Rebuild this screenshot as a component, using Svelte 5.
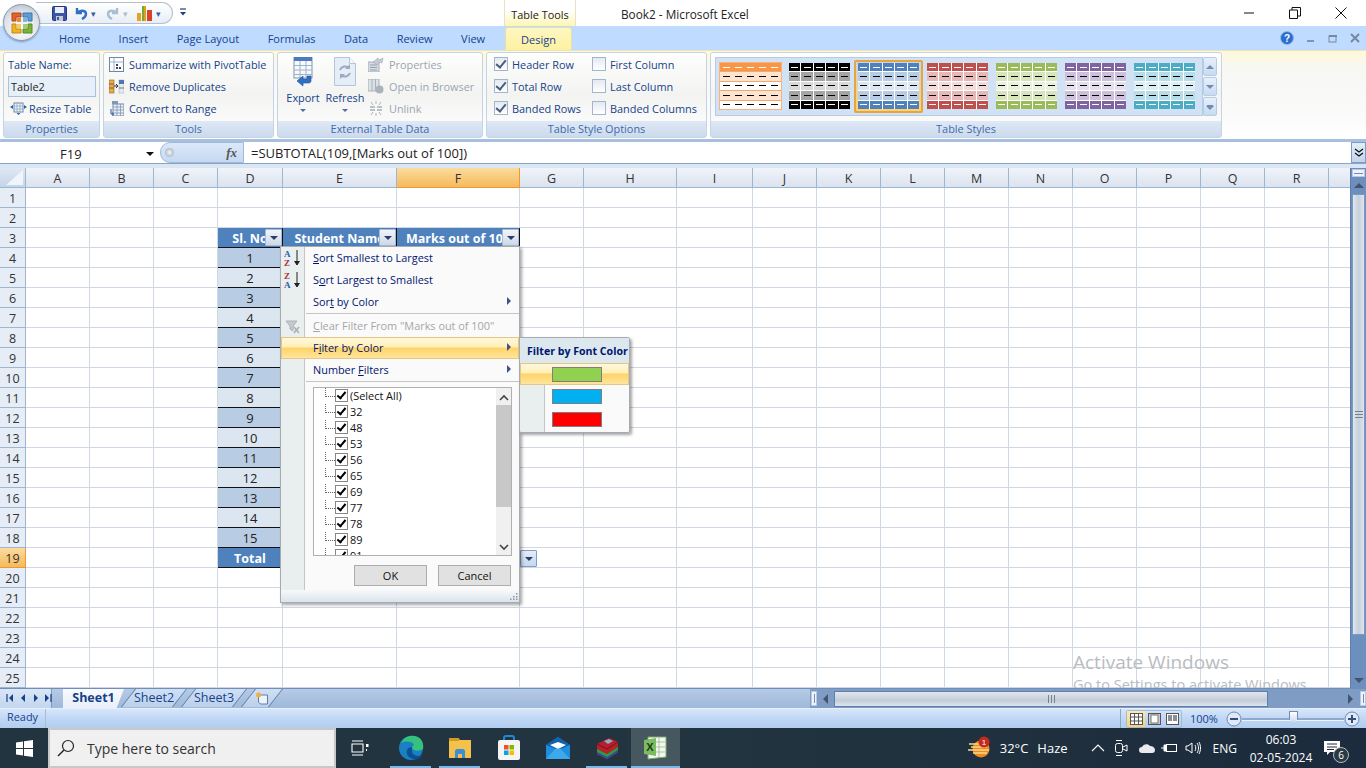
<script>
    const colWidths = [64, 64, 64, 65, 114, 123, 64, 93, 76, 64, 64, 64, 64, 64, 64, 64, 64, 64, 22];
    const colNames = ["A", "B", "C", "D", "E", "F", "G", "H", "I", "J", "K", "L", "M", "N", "O", "P", "Q", "R", ""];
    const rows = Array.from({length: 25}, (_, i) => i + 1);

    const gridTemplate = "26px " + colWidths.map(w => w + "px").join(" ");

    function cellClass(row, col) {
        let name = "cell";
        if (row === 3 && col >= 3 && col <= 5) name += " thead";
        if (row === 19 && col >= 3 && col <= 5) name += " thead";
        if (row > 3 && row < 19 && col >= 3 && col <= 5) name += row % 2 === 0 ? " band1" : " band2";
        return name;
    }

    function cellText(row, col) {
        if (col === 3 && row === 3) return "Sl. No";
        if (col === 4 && row === 3) return "Student Name";
        if (col === 5 && row === 3) return "Marks out of 100";
        if (col === 3 && row === 19) return "Total";
        if (col === 3 && row > 3 && row < 19) return String(row - 3);
        return "";
    }

    const styles = [
        {cls: "orange", head: "#f79646", band: "#fde4d0", light: "#ffffff", gap: "#f9a66a"},
        {cls: "", head: "#000000", band: "#a5a5a5", light: "#d9d9d9", gap: "#ffffff"},
        {cls: "picked", head: "#4f81bd", band: "#b8cce4", light: "#dce6f1", gap: "#ffffff"},
        {cls: "", head: "#c0504d", band: "#e6b8b7", light: "#f2dcdb", gap: "#ffffff"},
        {cls: "", head: "#9bbb59", band: "#d8e4bc", light: "#ebf1de", gap: "#ffffff"},
        {cls: "", head: "#8064a2", band: "#ccc0da", light: "#e4dfec", gap: "#ffffff"},
        {cls: "", head: "#4bacc6", band: "#b7dee8", light: "#daeef3", gap: "#ffffff"}
    ];

    function rowColor(s, r) {
        if (s.cls === "orange" && r === 4) return "#ffffff";
        if (r === 0 || r === 4) return s.head;
        return r === 2 ? s.light : s.band;
    }

    function dashColor(s, r) {
        if (s.cls === "orange" && r === 4) return "#000000";
        return r === 0 || r === 4 ? "#ffffff" : "#000000";
    }

    const values = ["(Select All)", "32", "48", "53", "56", "65", "69", "77", "78", "89", "91"];
    const tabs = ["Home", "Insert", "Page Layout", "Formulas", "Data", "Review", "View"];
</script>

<div class="excel">
    <header class="titlebar">
        <div class="officebtn">
            <svg width="26" height="26" viewBox="0 0 26 26">
                <path d="M3 3h9v4H7v4H3z" fill="#e2642a" stroke="#b8431a"/>
                <path d="M14 3h9v8h-4V7h-5z" fill="#4f95d6" stroke="#2b6aa8" opacity=".9"/>
                <path d="M3 14h4v5h5v4H3z" fill="#f0b41e" stroke="#c58a10"/>
                <path d="M19 14h4v9h-9v-4h5z" fill="#7bb23a" stroke="#558a20"/>
                <path d="M8 8h4v4H8z" fill="#e9873a"/>
                <path d="M14 8h4v4h-4z" fill="#7fb4e2"/>
                <path d="M8 14h4v4H8z" fill="#f5cb5a"/>
                <path d="M14 14h4v4h-4z" fill="#a3cc6a"/>
            </svg>
        </div>
        <div class="qat">
            <svg width="15" height="15" viewBox="0 0 15 15"><rect x=".5" y=".5" width="14" height="14" rx="1" fill="#3c55a5" stroke="#27377e"/><rect x="3" y="1" width="9" height="6" fill="#e8eefc"/><rect x="4" y="10" width="7" height="5" fill="#c6cbd8"/><rect x="5" y="11" width="2" height="3" fill="#3c55a5"/></svg>
            <svg class="q2" width="14" height="14" viewBox="0 0 14 14"><path d="M3 2v5h5M3.500 7C6 3.500 12 4 12 8c0 2.500-2 4-4 5" fill="none" stroke="#2f6fc4" stroke-width="2.400"/></svg>
            <span class="mini">▾</span>
            <svg class="q3" width="14" height="14" viewBox="0 0 14 14"><path d="M11 2v5H6M10.500 7C8 3.500 2 4 2 8c0 2.500 2 4 4 5" fill="none" stroke="#a9bdd3" stroke-width="2.400"/></svg>
            <span class="mini off">▾</span>
            <svg class="q4" width="17" height="17" viewBox="0 0 17 17"><rect x="1" y="8" width="4" height="8" fill="#e9a21f"/><rect x="6" y="1" width="4" height="15" fill="#d7a51a"/><rect x="6" y="1" width="2" height="15" fill="#7fa53a"/><rect x="11" y="5" width="5" height="11" fill="#d9432c"/></svg>
            <span class="mini">▾</span>
        </div>
        <svg class="customize" width="9" height="9" viewBox="0 0 9 9"><path d="M1 1h6" stroke="#1e3f80" stroke-width="1.200"/><path d="M1 4h6l-3 3.500z" fill="#1e3f80"/></svg>
        <div class="tools">Table Tools</div>
        <div class="doc-title">Book2 - Microsoft Excel</div>
        <div class="winbtns">
            <svg width="12" height="12" viewBox="0 0 12 12"><path d="M1 6h10" stroke="#111"/></svg>
            <svg width="12" height="12" viewBox="0 0 12 12"><path d="M.5 3h8v8.500h-8zM3 3V.5h8.500V9H8.500" fill="none" stroke="#111"/></svg>
            <svg width="12" height="12" viewBox="0 0 12 12"><path d="M.5.5l11 11M11.500.5l-11 11" stroke="#111"/></svg>
        </div>
    </header>

    <nav class="tabs">
        {#each tabs as t}
            <span>{t}</span>
        {/each}
        <span class="design">Design</span>
        <div class="appbtns">
            <svg width="14" height="14" viewBox="0 0 14 14"><circle cx="7" cy="7" r="6.500" fill="#2a6fd0" stroke="#9cb8dd"/><text x="7" y="11" text-anchor="middle" font-size="10" font-weight="700" fill="#fff" font-family="Liberation Sans">?</text></svg>
            <svg width="10" height="10" viewBox="0 0 10 10"><rect x="1" y="7" width="7" height="2" fill="#8295ab"/></svg>
            <svg width="10" height="10" viewBox="0 0 10 10"><rect x="1" y="3" width="7" height="6" fill="none" stroke="#76899f"/><rect x="1" y="2" width="8" height="2" fill="#76899f"/></svg>
            <svg width="10" height="10" viewBox="0 0 10 10"><path d="M1 1l8 8M9 1l-8 8" stroke="#76899f" stroke-width="2"/></svg>
        </div>
    </nav>

    <section class="ribbon">
        <div class="group g-props">
            <div class="gbody props">
                <span class="lbl">Table Name:</span>
                <div class="namebox">Table2</div>
                <div class="item rz">
                    <svg width="17" height="14" viewBox="0 0 17 14"><rect x="4" y="2" width="9" height="9" fill="#f2f6fb" stroke="#6a86a8"/><path d="M4 5h9M4 8h9M7 2v9M10 2v9" stroke="#9db2ca"/><path d="M0 6l3-2v4zM17 6l-3-2v4zM8.500 14l-2-2h4z" fill="#2a63ad"/></svg>
                    <span>Resize Table</span>
                </div>
            </div>
            <div class="glabel">Properties</div>
        </div>

        <div class="group g-tools">
            <div class="gbody list">
                <div class="item">
                    <svg width="15" height="15" viewBox="0 0 15 15"><rect x=".5" y=".5" width="14" height="14" fill="#fafcff" stroke="#6f85a0"/><path d="M.5 5h14M5 .5v14" stroke="#9db2ca"/><rect x="7" y="7" width="2" height="2" fill="#444"/><rect x="10" y="10" width="2" height="2" fill="#444"/><rect x="7" y="10" width="2" height="2" fill="#444"/></svg>
                    <span>Summarize with PivotTable</span>
                </div>
                <div class="item">
                    <svg width="15" height="15" viewBox="0 0 15 15"><rect x="0" y="1" width="5" height="13" fill="#e7a94b" stroke="#8a6a2c" stroke-width=".6"/><rect x="10" y="1" width="5" height="13" fill="#e6e9ef" stroke="#a7b2c2" stroke-width=".6"/><rect x="10" y="1" width="5" height="4" fill="#4d78b5"/><path d="M0 5h5M0 9h5M10 9h5" stroke="#5a4a2a" stroke-width=".7"/><path d="M5 7h4M7 5l2 2-2 2" stroke="#333" fill="none"/></svg>
                    <span>Remove Duplicates</span>
                </div>
                <div class="item">
                    <svg width="15" height="15" viewBox="0 0 15 15"><rect x="4" y="3" width="11" height="12" fill="#eef2f8" stroke="#6f85a0"/><path d="M4 6h11M4 9h11M4 12h11M8 3v12M11.500 3v12" stroke="#8ea3bd"/><rect x="3" y="0" width="6" height="3" fill="#7f98b9"/><path d="M2 8v5h2M3.500 11.500l1 1.500-1 1.500" stroke="#25599d" fill="none"/></svg>
                    <span>Convert to Range</span>
                </div>
            </div>
            <div class="glabel">Tools</div>
        </div>

        <div class="group g-ext">
            <div class="gbody ext">
                <div class="big">
                    <svg width="20" height="30" viewBox="0 0 20 30"><rect x="1" y="0" width="18" height="21" fill="#f7fafd" stroke="#7c93b2"/><rect x="1" y="0" width="18" height="4" fill="#4d79bd"/><path d="M1 8.500h18M1 13h18M1 17.500h18M7 4v17M13 4v17" stroke="#9fb2c8"/><path d="M18 19v5c0 1-1 2-2 2H10v3l-6-5 6-5v3h4v-3z" fill="#2f6fc4" stroke="#1e4f96" stroke-width=".6"/></svg>
                    <span>Export</span>
                    <i class="drop"></i>
                </div>
                <div class="big">
                    <svg width="22" height="30" viewBox="0 0 22 30"><path d="M.5.500h15l6 6v22H.5z" fill="#e5edf7" stroke="#b4c4da"/><path d="M15.500.5v6h6" fill="#f7fafd" stroke="#b4c4da"/><path d="M6 13a5.500 5.500 0 0 1 9-2M16 16a5.500 5.500 0 0 1-9 2" fill="none" stroke="#9aa9bd" stroke-width="2"/><path d="M16 7v5h-5zM6 22v-5h5z" fill="#9aa9bd"/></svg>
                    <span>Refresh</span>
                    <i class="drop"></i>
                </div>
                <div class="list off">
                    <div class="item">
                        <svg width="16" height="15" viewBox="0 0 16 15"><rect x="0" y="5" width="11" height="10" fill="#d5dbe2" stroke="#a7b0ba"/><path d="M2 8h7M2 10.500h7M2 13h7" stroke="#98a3ae"/><path d="M5 5l5-4 1 2 4-2-1 5-2-1-3 3z" fill="#c2cad3" stroke="#a0aab5" stroke-width=".6"/></svg>
                        <span>Properties</span>
                    </div>
                    <div class="item">
                        <svg width="16" height="15" viewBox="0 0 16 15"><rect x="0" y="0" width="11" height="12" fill="#dbe1e7" stroke="#a7b0ba"/><path d="M4 0v12M7.500 0v12" stroke="#a7b0ba"/><circle cx="11.500" cy="10.500" r="4" fill="#aab3bc"/></svg>
                        <span>Open in Browser</span>
                    </div>
                    <div class="item">
                        <svg width="16" height="15" viewBox="0 0 16 15"><path d="M2 6h5M2 9h5M9 6h5M9 9h5" stroke="#a7b0ba" stroke-width="1.600"/><path d="M8 0v3M8 12v3M3 1l2 3M13 1l-2 3M3 14l2-3M13 14l-2-3" stroke="#aab3bc"/></svg>
                        <span>Unlink</span>
                    </div>
                </div>
            </div>
            <div class="glabel">External Table Data</div>
        </div>

        <div class="group g-opts">
            <div class="gbody opts">
                <label class="chk"><i class="box on"></i>Header Row</label>
                <label class="chk"><i class="box"></i>First Column</label>
                <label class="chk"><i class="box on"></i>Total Row</label>
                <label class="chk"><i class="box"></i>Last Column</label>
                <label class="chk"><i class="box on"></i>Banded Rows</label>
                <label class="chk"><i class="box"></i>Banded Columns</label>
            </div>
            <div class="glabel">Table Style Options</div>
        </div>

        <div class="group g-styles">
            <div class="gbody gallery-wrap">
                <div class="gallery">
                    {#each styles as s}
                        <div class="thumb-frame {s.cls}">
                            <div class="thumb {s.cls}" style="background:{s.gap}">
                                {#each [0, 1, 2, 3, 4] as r}
                                    {#each [0, 1, 2, 3, 4] as c}
                                        <div class="tc" style="background:{rowColor(s, r)}">
                                            <i style="background:{dashColor(s, r)}"></i>
                                        </div>
                                    {/each}
                                {/each}
                            </div>
                        </div>
                    {/each}
                </div>
                <div class="gscroll">
                    <button aria-label="up"><i class="up"></i></button>
                    <button aria-label="down"><i class="dn"></i></button>
                    <button aria-label="more"><i class="more"></i></button>
                </div>
            </div>
            <div class="glabel">Table Styles</div>
        </div>
    </section>

    <section class="formula">
        <div class="namecell">
            <span>F19</span>
            <i class="blk"></i>
        </div>
        <div class="fxpill">
            <b class="knob"></b>
            <em>fx</em>
        </div>
        <div class="ftext">=SUBTOTAL(109,[Marks out of 100])</div>
        <div class="expand">
            <svg width="10" height="10" viewBox="0 0 10 10"><path d="M1 1l4 3 4-3M1 5l4 3 4-3" fill="none" stroke="#111" stroke-width="1.300"/></svg>
        </div>
    </section>

    <section class="sheet-wrap">
        <div class="sheet">
            <div class="grid" style="grid-template-columns:{gridTemplate}">
                <div class="corner"><i></i></div>
                {#each colNames as name, i}
                    <div class="colhead" class:sel={i === 5}>{name}</div>
                {/each}
                {#each rows as row}
                    <div class="rowhead" class:sel={row === 19}>{row}</div>
                    {#each colWidths as _, col}
                        <div class={cellClass(row, col)}>
                            {cellText(row, col)}
                            {#if row === 3 && col >= 3 && col <= 5}
                                <button class="filterbtn" aria-label="filter"><i></i></button>
                            {/if}
                        </div>
                    {/each}
                {/each}
            </div>

            <button class="filterbtn total-btn" aria-label="total"><i></i></button>

            <div class="watermark">
                <div>Activate Windows</div>
                <small>Go to Settings to activate Windows.</small>
            </div>

            <div class="menu">
                <div class="mi">
                    <svg class="mi-icon" width="20" height="20" viewBox="0 0 20 20"><text x="1" y="9" font-size="9" font-weight="700" fill="#2a5aa8" font-family="Liberation Serif">A</text><text x="1" y="18" font-size="9" font-weight="700" fill="#a8343a" font-family="Liberation Serif">Z</text><path d="M14 2v14M11.500 13l2.500 4 2.500-4" fill="#222" stroke="#222"/></svg>
                    <span><u>S</u>ort Smallest to Largest</span>
                </div>
                <div class="mi">
                    <svg class="mi-icon" width="20" height="20" viewBox="0 0 20 20"><text x="1" y="9" font-size="9" font-weight="700" fill="#a8343a" font-family="Liberation Serif">Z</text><text x="1" y="18" font-size="9" font-weight="700" fill="#2a5aa8" font-family="Liberation Serif">A</text><path d="M14 2v14M11.500 13l2.500 4 2.500-4" fill="#222" stroke="#222"/></svg>
                    <span>S<u>o</u>rt Largest to Smallest</span>
                </div>
                <div class="mi">
                    <span>Sor<u>t</u> by Color</span>
                    <i class="arr"></i>
                </div>
                <div class="msep first"></div>
                <div class="mi dis">
                    <svg class="mi-icon" width="16" height="16" viewBox="0 0 16 16"><path d="M1 2h11L8 7v5L5 10V7z" fill="#c3cbd0" stroke="#aab2b8"/><path d="M9 8l5 6M14 8l-5 6" stroke="#a8b0b6" stroke-width="1.500"/></svg>
                    <span><u>C</u>lear Filter From "Marks out of 100"</span>
                </div>
                <div class="mi hot">
                    <span>F<u>i</u>lter by Color</span>
                    <i class="arr"></i>
                </div>
                <div class="mi">
                    <span>Number <u>F</u>ilters</span>
                    <i class="arr"></i>
                </div>
                <div class="msep"></div>

                <div class="listbox">
                    <div class="vals">
                        {#each values as v}
                            <div class="val"><b class="dots"></b><i class="tick"></i>{v}</div>
                        {/each}
                    </div>
                    <div class="lscroll">
                        <svg width="10" height="8" viewBox="0 0 10 8"><path d="M1 6l4-4 4 4" fill="none" stroke="#444" stroke-width="1.600"/></svg>
                        <div class="lthumb"></div>
                        <svg width="10" height="8" viewBox="0 0 10 8"><path d="M1 2l4 4 4-4" fill="none" stroke="#444" stroke-width="1.600"/></svg>
                    </div>
                </div>

                <div class="mbtns">
                    <button>OK</button>
                    <button>Cancel</button>
                </div>
                <div class="mfoot">
                    <svg width="8" height="8" viewBox="0 0 8 8"><path d="M6 1h1.500v1.500H6zM3 4h1.500v1.500H3zM6 4h1.500v1.500H6zM0 6.500h1.500V8H0zM3 6.500h1.500V8H3zM6 6.500h1.500V8H6z" fill="#8c9aa8"/></svg>
                </div>
            </div>

            <div class="submenu">
                <div class="subhead">Filter by Font Color</div>
                <div class="swrow hot"><i style="background:#92d050"></i></div>
                <div class="swrow"><i style="background:#00b0f0"></i></div>
                <div class="swrow"><i style="background:#ff0000"></i></div>
            </div>
        </div>

        <div class="vscroll">
            <div class="split"><i></i></div>
            <div class="varrow"><i class="up"></i></div>
            <div class="vthumb"><b></b></div>
            <div class="vtrack"></div>
            <div class="varrow low"><i class="dn"></i></div>
        </div>
    </section>

    <section class="sheetbar">
        <div class="navs">
            <svg width="46" height="10" viewBox="0 0 46 10"><path d="M1 1v8" stroke="#15428b" stroke-width="1.200"/><path d="M7 1L3 5l4 4zM19 1l-4 4 4 4zM28 1l4 4-4 4zM39 1l4 4-4 4z" fill="#15428b"/><path d="M45 1v8" stroke="#15428b" stroke-width="1.200"/></svg>
        </div>
        <div class="sheets">
            <span class="stab on">Sheet1</span>
            <span class="stab">Sheet2</span>
            <span class="stab">Sheet3</span>
            <span class="stab add">
                <svg width="14" height="13" viewBox="0 0 14 13"><path d="M3.500 3h9v9h-7l-2-2z" fill="#eef3fa" stroke="#5d7ea8"/><circle cx="3.500" cy="3" r="2.500" fill="#f0b040"/></svg>
            </span>
        </div>
        <div class="hs-area">
            <div class="hsplit"><i></i></div>
            <i class="harr left"></i>
            <div class="hthumb"><b></b></div>
            <div class="htrack"></div>
            <i class="harr right"></i>
            <div class="hsplit"><i></i></div>
        </div>
    </section>

    <footer class="status">
        <span class="ready">Ready</span>
        <div class="zoombar">
            <div class="views">
                <span class="on"><svg width="13" height="12" viewBox="0 0 13 12"><rect x=".5" y=".5" width="12" height="11" fill="#fff" stroke="#555"/><path d="M.5 4h12M.5 8h12M4.500.5v11M8.500.5v11" stroke="#555"/></svg></span>
                <span><svg width="13" height="12" viewBox="0 0 13 12"><rect x=".5" y=".5" width="12" height="11" fill="#c9cdd2" stroke="#555"/><rect x="3" y="2" width="7" height="8" fill="#fff" stroke="#777"/></svg></span>
                <span><svg width="13" height="12" viewBox="0 0 13 12"><rect x=".5" y=".5" width="12" height="11" fill="#fff" stroke="#555"/><rect x="2" y="2" width="4" height="6" fill="#8a8f96"/><rect x="7" y="2" width="4" height="6" fill="#8a8f96"/></svg></span>
            </div>
            <span class="pct">100%</span>
            <svg class="zb" width="16" height="16" viewBox="0 0 16 16"><circle cx="8" cy="8" r="7" fill="#dfe9f7" stroke="#6d8ab3"/><path d="M4 8h8" stroke="#32507c" stroke-width="2"/></svg>
            <div class="slider"><i></i></div>
            <svg class="zb" width="16" height="16" viewBox="0 0 16 16"><circle cx="8" cy="8" r="7" fill="#dfe9f7" stroke="#6d8ab3"/><path d="M4 8h8M8 4v8" stroke="#32507c" stroke-width="2"/></svg>
        </div>
    </footer>

    <footer class="taskbar">
        <div class="start">
            <svg width="17" height="17" viewBox="0 0 17 17"><path d="M0 2.400l7-1V8H0zM8 1.300L17 0v8H8zM0 9h7v6.600l-7-1zM8 9h9v8l-9-1.300z" fill="#fff"/></svg>
        </div>
        <div class="search">
            <svg width="18" height="18" viewBox="0 0 18 18"><circle cx="11" cy="7" r="5.500" fill="none" stroke="#222" stroke-width="1.200"/><path d="M7 11l-6 6" stroke="#222" stroke-width="1.400"/></svg>
            <span>Type here to search</span>
        </div>
        <div class="apps">
            <span class="app tv">
                <svg width="18" height="16" viewBox="0 0 18 16"><path d="M1 1h11M1 15h11M1 4h11v8H1z" fill="none" stroke="#fff" stroke-width="1.100"/><rect x="15" y="4" width="2.500" height="3" fill="#fff"/><rect x="15" y="9" width="1" height="2" fill="#fff"/></svg>
            </span>
            <span class="app run">
                <svg width="26" height="26" viewBox="0 0 26 26"><circle cx="13" cy="13" r="12" fill="#1b7fc4"/><path d="M3 8C6 1 14-1 20 2c4 2 6 7 5 12-4 3-10 2-11-1 0-2 2-3 2-3-1-3-7-5-13-2z" fill="#35c27e"/><path d="M14 12c-4 0-6 3-5 7 1 3 5 6 11 5 2-1 3-2 4-4-3 2-9 1-10-3z" fill="#0b4f94"/></svg>
            </span>
            <span class="app run">
                <svg width="24" height="22" viewBox="0 0 24 22"><path d="M1 1h9l2 2h11v18H1z" fill="#f4c24c"/><rect x="1" y="1" width="10" height="3" fill="#d39b1d"/><path d="M7 21v-7c0-1 1-2 2-2h6c1 0 2 1 2 2v7h-3v-4h-4v4z" fill="#3b8fd6"/></svg>
            </span>
            <span class="app">
                <svg width="24" height="26" viewBox="0 0 24 26"><path d="M7 6V3c0-1 1-2 2-2h6c1 0 2 1 2 2v3" fill="none" stroke="#1b8ad8" stroke-width="2"/><rect x="1" y="5" width="22" height="20" rx="2" fill="#f4f4f4"/><rect x="7" y="10" width="4.500" height="4.500" fill="#f25022"/><rect x="12.500" y="10" width="4.500" height="4.500" fill="#7fba00"/><rect x="7" y="15.500" width="4.500" height="4.500" fill="#00a4ef"/><rect x="12.500" y="15.500" width="4.500" height="4.500" fill="#ffb900"/></svg>
            </span>
            <span class="app">
                <svg width="24" height="22" viewBox="0 0 24 22"><path d="M0 8l12-8 12 8v14H0z" fill="#1e8fdc"/><path d="M0 8l12-8 12 8-12 5z" fill="#0f62ad"/><path d="M4 8l8-3 8 3-8 4z" fill="#fff"/><path d="M0 22L10 11l2 1 2-1 10 11z" fill="#3ba9ec"/></svg>
            </span>
            <span class="app run">
                <svg width="24" height="24" viewBox="0 0 24 24"><path d="M2 8l12-6 9 4v10l-11 7-10-5z" fill="#b5202a"/><path d="M2 8l10 5 11-7" fill="none" stroke="#7a1018"/><path d="M2 13l10 5 11-7v5l-11 7-10-5z" fill="#2f9b3f"/><path d="M2 16l10 5 11-7v2l-11 7-10-5z" fill="#3b3fa8"/><path d="M9 5l5-2 4 2-5 3z" fill="#9aa7c9"/></svg>
            </span>
            <span class="app run active">
                <svg width="25" height="24" viewBox="0 0 25 24"><path d="M5 1h18v20L5 23z" fill="#f3f7ef" stroke="#7aa86a"/><path d="M11 6h11M11 11h11M11 16h11M16 2v19" stroke="#a9c49c"/><path d="M1 4l12-2v18L1 18z" fill="#7dbb62"/><text x="7" y="15" text-anchor="middle" font-size="11" font-weight="700" fill="#123d1a" font-family="Liberation Sans">X</text></svg>
            </span>
        </div>
        <div class="tray">
            <div class="weather">
                <svg width="24" height="24" viewBox="0 0 24 24"><circle cx="14" cy="13" r="8.500" fill="#ee8a23"/><path d="M2 8h11M4 11h16M1 14h21M6 17h14" stroke="#f7d98a" stroke-width="1.500"/><circle cx="17" cy="6" r="5.500" fill="#c42b1c"/><text x="17" y="9" text-anchor="middle" font-size="8" fill="#fff" font-family="Liberation Sans">1</text></svg>
            </div>
            <span class="temp">32°C</span>
            <span class="haze">Haze</span>
            <svg class="t1" width="14" height="8" viewBox="0 0 14 8"><path d="M1 7l6-6 6 6" fill="none" stroke="#fff" stroke-width="1.100"/></svg>
            <svg class="t2" width="14" height="18" viewBox="0 0 14 18"><rect x="1.500" y="4.500" width="7" height="9" rx="2" fill="none" stroke="#fff"/><path d="M9 8l4-2v6l-4-2M2 1.500h6M2 16.500h6" fill="none" stroke="#fff"/></svg>
            <svg class="t3" width="16" height="10" viewBox="0 0 16 10"><path d="M3 10a3 3 0 0 1 0-6c1-3 6-4 8-1 3 0 5 2 5 4s-1 3-3 3z" fill="#e8eaee"/></svg>
            <svg class="t4" width="16" height="12" viewBox="0 0 16 12"><rect x="5.500" y="2.500" width="10" height="7" fill="none" stroke="#fff"/><path d="M0 6h3M3 3h2v6H3z" fill="#fff" stroke="#fff"/></svg>
            <svg class="t5" width="16" height="14" viewBox="0 0 16 14"><path d="M1 5h2l4-3v10L3 9H1zM10 4c1 2 1 4 0 6M12 2c2 3 2 7 0 10M14 1c2 4 2 8 0 12" fill="none" stroke="#fff"/></svg>
            <span class="eng">ENG</span>
            <div class="clock"><span>06:03</span><span>02-05-2024</span></div>
            <div class="notif">
                <svg width="16" height="15" viewBox="0 0 16 15"><path d="M0 0h16v11H6l-3 3v-3H0z" fill="#fff"/><path d="M3 3h10M3 6h10M3 8.500h7" stroke="#1c2b3a"/></svg>
                <b>6</b>
            </div>
        </div>
    </footer>
</div>

<style>
    :global(body) {
        margin: 0;
        background: #fff;
    }

    .excel {
        width: 1366px;
        height: 768px;
        overflow: hidden;
        position: relative;
        font-family: "Open Sans", "Liberation Sans", sans-serif;
        font-size: 10.9px;
        color: #15428b;
        display: flex;
        flex-direction: column;
    }

    svg {
        display: block;
        flex: none;
    }

    button {
        font-family: inherit;
        padding: 0;
    }

    /* title row */
    .titlebar {
        height: 26px;
        display: flex;
        align-items: flex-start;
        background: #fff;
        position: relative;
    }

    .officebtn {
        position: absolute;
        left: 3px;
        top: 4px;
        width: 37px;
        height: 37px;
        box-sizing: border-box;
        border-radius: 50%;
        z-index: 3;
        border: 1px solid #8b98a8;
        box-shadow: 0 1px 2px rgba(60, 80, 110, .5);
        background: radial-gradient(circle at 50% 70%, #fff, #dde2e8 60%, #a9b2be);
        display: flex;
        align-items: center;
        justify-content: center;
    }

    .qat {
        margin-left: 36px;
        margin-top: 2px;
        width: 137px;
        height: 22px;
        box-sizing: border-box;
        padding-left: 16px;
        display: flex;
        align-items: center;
        background: linear-gradient(#fff, #e8eef6);
        border: 1px solid #b4c0ce;
        border-left: 0;
        border-radius: 0 11px 11px 0;
    }

    .q2 {
        margin-left: 7px;
    }

    .q3 {
        margin-left: 10px;
    }

    .q4 {
        margin-left: 8px;
    }

    .mini {
        font-size: 9px;
        color: #3a5f9d;
        margin-left: 3px;
    }

    .mini.off {
        color: #b2bdc9;
    }

    .customize {
        margin: 8px 0 0 6px;
    }

    .tools {
        margin-left: 316px;
        width: 72px;
        height: 26px;
        line-height: 29px;
        text-align: center;
        color: #222;
        background: linear-gradient(#fff, #fff 40%, #fdf6b4);
        border-left: 1px solid #e8e2c0;
        border-right: 1px solid #e8e2c0;
        box-sizing: border-box;
    }

    .doc-title {
        margin-left: 45px;
        font-size: 11.8px;
        line-height: 28px;
        color: #222;
    }

    .winbtns {
        margin-left: auto;
        display: flex;
        gap: 34px;
        padding: 7px 19px 0 0;
    }

    /* tabs */
    .tabs {
        height: 24px;
        background: #bfdbff;
        display: flex;
        align-items: center;
        gap: 28.5px;
        padding-left: 59px;
        font-size: 11px;
        color: #15428b;
        position: relative;
    }

    .tabs .design {
        position: absolute;
        left: 505px;
        top: 1px;
        width: 67px;
        height: 23px;
        line-height: 24px;
        text-align: center;
        background: linear-gradient(#fdf7c2, #fdf1a0);
        border: 1px solid #e6dfa8;
        border-bottom: 0;
        border-radius: 3px 3px 0 0;
        box-sizing: border-box;
    }

    .appbtns {
        margin-left: auto;
        display: flex;
        align-items: center;
        gap: 12px;
        padding-right: 6px;
    }

    /* ribbon */
    .ribbon {
        height: 92px;
        box-sizing: border-box;
        padding: 1px 2px 0 3px;
        display: flex;
        gap: 3px;
        background: linear-gradient(#fff9d8, #f7f7f4 20%, #fafafa 70%, #fff);
        border-top: 1px solid #e8e2c0;
        border-bottom: 3px solid #a7c0df;
    }

    .group {
        border: 1px solid #c5d3e5;
        border-radius: 3px;
        display: flex;
        flex-direction: column;
        box-sizing: border-box;
        background: linear-gradient(#fefefc, #f3f4f2 50%, #fefefe);
        height: 86px;
    }

    .gbody {
        flex: 1;
        min-height: 0;
    }

    .glabel {
        height: 16px;
        line-height: 16px;
        text-align: center;
        color: #3e6aaa;
        background: linear-gradient(#dfe9f6, #cbdaed);
    }

    .g-props {
        width: 97px;
    }

    .g-tools {
        width: 171px;
    }

    .g-ext {
        width: 206px;
    }

    .g-opts {
        width: 221px;
    }

    .g-styles {
        width: 512px;
    }

    .props {
        padding: 3px 4px 0;
    }

    .lbl {
        display: block;
        height: 18px;
        line-height: 18px;
    }

    .namebox {
        width: 88px;
        height: 21px;
        line-height: 20px;
        box-sizing: border-box;
        border: 1px solid #a9c1de;
        background: #e7eff9;
        color: #222;
        padding-left: 2px;
        margin-top: 2px;
    }

    .item {
        display: flex;
        align-items: center;
        gap: 5px;
        height: 22px;
        white-space: nowrap;
    }

    .rz {
        gap: 2px;
        margin-left: 2px;
    }

    .list {
        padding-left: 5px;
    }

    .ext {
        display: flex;
        padding: 4px 0 0 4px;
    }

    .big {
        width: 42px;
        display: flex;
        flex-direction: column;
        align-items: center;
        color: #15428b;
    }

    .big span {
        margin-top: 3px;
    }

    .drop {
        margin-top: 4px;
        border: 3px solid transparent;
        border-top: 3px solid #4f6f9f;
        border-bottom: 0;
    }

    .ext .list {
        padding: 0 0 0 2px;
        margin-top: -4px;
        color: #9aa5b1;
    }

    .opts {
        display: grid;
        grid-template-columns: 98px 1fr;
        grid-auto-rows: 22px;
        padding: 0 0 0 7px;
    }

    .chk {
        display: flex;
        align-items: center;
        gap: 4px;
        white-space: nowrap;
    }

    .box {
        width: 12px;
        height: 12px;
        border: 1px solid #a0b5d0;
        background: linear-gradient(#e4e9f0, #fff);
        position: relative;
        flex: none;
    }

    .box.on::after {
        content: "";
        position: absolute;
        left: 3px;
        top: 0;
        width: 4px;
        height: 8px;
        border: solid #4a5f7e;
        border-width: 0 2px 2px 0;
        transform: rotate(40deg);
    }

    .gallery-wrap {
        display: flex;
        padding: 4px 0 0 4px;
    }

    .gallery {
        width: 488px;
        height: 59px;
        box-sizing: border-box;
        background: #d2e2f5;
        border: 1px solid #b6cbe6;
        padding: 2px 0 0 0;
        display: flex;
    }

    .thumb-frame {
        width: 69px;
        height: 53px;
        box-sizing: border-box;
        padding: 3px 4px;
        flex: none;
    }

    .thumb-frame.picked {
        background: linear-gradient(#c7d6e8, #ffd36e);
        border: 2px solid #e9a33f;
        border-radius: 2px;
        padding: 1px 2px;
    }

    .thumb {
        width: 61px;
        height: 46px;
        display: grid;
        grid-template-columns: repeat(5, 1fr);
        grid-template-rows: repeat(5, 1fr);
        gap: 1px;
    }

    .thumb.orange {
        column-gap: 0;
        outline: 1px solid #f9b27c;
    }

    .tc {
        display: flex;
        align-items: center;
        justify-content: center;
    }

    .tc i {
        width: 7px;
        height: 1px;
    }

    .gscroll {
        display: flex;
        flex-direction: column;
        gap: 1px;
        width: 14px;
    }

    .gscroll button {
        height: 19px;
        border: 1px solid #b6cbe6;
        background: linear-gradient(#e7f0fb, #c8daf0);
        border-radius: 2px;
        display: flex;
        align-items: center;
        justify-content: center;
    }

    .gscroll .up {
        border: 4px solid transparent;
        border-bottom: 4px solid #6f8cb4;
        border-top: 0;
    }

    .gscroll .dn {
        border: 4px solid transparent;
        border-top: 4px solid #6f8cb4;
        border-bottom: 0;
    }

    .gscroll .more {
        border: 4px solid transparent;
        border-top: 4px solid #6f8cb4;
        border-bottom: 0;
        position: relative;
        top: 1px;
        box-shadow: 0 -2px 0 -1px #6f8cb4;
    }

    /* formula bar */
    .formula {
        height: 26px;
        box-sizing: border-box;
        display: flex;
        background: #fff;
        border-bottom: 4px solid #dbe6f5;
        box-shadow: inset 0 -1px 0 #8aa4c4;
        font-size: 13px;
        color: #222;
    }

    .namecell {
        width: 160px;
        display: flex;
        align-items: center;
        padding: 1px 0 0 60px;
        box-sizing: border-box;
    }

    .blk {
        margin-left: 64px;
        border: 4px solid transparent;
        border-top: 4px solid #111;
        border-bottom: 0;
    }

    .fxpill {
        width: 84px;
        height: 21px;
        box-sizing: border-box;
        background: linear-gradient(#dbe8f8, #c6d9f1);
        border: 1px solid #a2bad9;
        border-radius: 10px 0 0 10px;
        display: flex;
        align-items: center;
        padding: 0 6px 0 4px;
        justify-content: space-between;
    }

    .knob {
        width: 9px;
        height: 9px;
        border-radius: 50%;
        background: radial-gradient(#f4f6f9, #96a5b8);
    }

    .fxpill em {
        font-family: "Liberation Serif", serif;
        font-size: 13px;
        font-weight: 700;
        color: #555;
    }

    .ftext {
        flex: 1;
        line-height: 23px;
        padding-left: 7px;
    }

    .expand {
        width: 15px;
        height: 21px;
        box-sizing: border-box;
        background: linear-gradient(#e3edf9, #c3d5ec);
        border: 1px solid #7f9bc0;
        display: flex;
        align-items: center;
        justify-content: center;
    }

    /* sheet */
    .sheet-wrap {
        height: 520px;
        display: flex;
    }

    .sheet {
        width: 1350px;
        position: relative;
        overflow: hidden;
    }

    .grid {
        display: grid;
        grid-auto-rows: 20px;
        font-size: 13px;
        color: #222;
    }

    .corner {
        background: linear-gradient(#dfe8f4, #c5d4e8);
        border-right: 1px solid #9eb6ce;
        border-bottom: 1px solid #9eb6ce;
        box-sizing: border-box;
        position: relative;
    }

    .corner i {
        position: absolute;
        right: 2px;
        bottom: 2px;
        border-style: solid;
        border-width: 0 0 15px 17px;
        border-color: transparent transparent #f0f5fb transparent;
    }

    .colhead,
    .rowhead {
        box-sizing: border-box;
        background: linear-gradient(#f0f4fa, #dbe3ef);
        border-right: 1px solid #9eb6ce;
        border-bottom: 1px solid #9eb6ce;
        text-align: center;
        line-height: 21px;
        font-size: 12.5px;
        color: #333;
    }

    .rowhead {
        background: #e6edf7;
    }

    .colhead.sel,
    .rowhead.sel {
        background: linear-gradient(#fbdc9e, #f5ba5b);
        border-color: #f29536;
    }

    .cell {
        box-sizing: border-box;
        border-right: 1px solid #d0d7e5;
        border-bottom: 1px solid #d0d7e5;
        text-align: center;
        line-height: 21px;
        position: relative;
        white-space: nowrap;
        overflow: hidden;
    }

    .thead {
        background: #4f81bd;
        color: #fff;
        font-weight: 700;
        font-size: 12.5px;
        border-right: 1px solid #111;
        border-bottom: 1px solid #111;
    }

    .band1 {
        background: #b8cce4;
        border-right: 1px solid #111;
        border-bottom: 1px solid #111;
    }

    .band2 {
        background: #dce6f1;
        border-right: 1px solid #111;
        border-bottom: 1px solid #111;
    }

    .filterbtn {
        position: absolute;
        right: 0;
        top: 1px;
        width: 17px;
        height: 17px;
        background: linear-gradient(#f2f5fa, #cdd8e8);
        border: 1px solid #a8bbd4;
        border-radius: 1px;
        display: flex;
        align-items: center;
        justify-content: center;
    }

    .filterbtn i {
        border: 4px solid transparent;
        border-top: 4px solid #2b3e6a;
        border-bottom: 0;
    }

    .total-btn {
        left: 520px;
        top: 382px;
        right: auto;
        background: linear-gradient(#e4ecf7, #c6d7ee);
        border-color: #7f9fcb;
    }

    .watermark {
        position: absolute;
        left: 1073px;
        top: 482px;
        color: #b9bcc0;
        font-size: 19px;
        line-height: 24px;
        white-space: nowrap;
    }

    .watermark small {
        display: block;
        font-size: 14.5px;
        line-height: 22px;
    }

    /* filter menu */
    .menu {
        position: absolute;
        left: 280px;
        top: 78px;
        width: 240px;
        height: 357px;
        box-sizing: border-box;
        border: 1px solid #a7abb0;
        background: linear-gradient(90deg, #e9eeee 0, #e9eeee 23px, #c5c5c5 23px, #c5c5c5 24px, #fafafa 24px);
        box-shadow: 2px 2px 3px rgba(0, 0, 0, .35);
        color: #00156e;
        z-index: 2;
    }

    .mi {
        height: 22px;
        box-sizing: border-box;
        display: flex;
        align-items: center;
        padding: 0 0 2px 32px;
        position: relative;
        white-space: nowrap;
    }

    .mi-icon {
        position: absolute;
        left: 2px;
        top: 1px;
    }

    .mi.dis {
        color: #a6a6a6;
    }

    .mi.dis .mi-icon {
        left: 4px;
        top: 4px;
    }

    .mi.hot {
        background: linear-gradient(#fff8e0, #ffefb8 45%, #ffd468 50%, #ffe6a0);
        box-shadow: inset 0 0 0 1px #e2c886;
    }

    .arr {
        position: absolute;
        right: 8px;
        top: 6px;
        border: 4px solid transparent;
        border-left: 4px solid #40508c;
        border-right: 0;
    }

    .msep {
        height: 1px;
        background: #c5c5c5;
        margin: 0 0 0 25px;
    }

    .msep.first {
        margin-bottom: 1px;
    }

    .listbox {
        margin: 5px 0 0 32px;
        width: 199px;
        height: 169px;
        box-sizing: border-box;
        border: 1px solid #b0b0b0;
        background: #fff;
        display: flex;
        overflow: hidden;
    }

    .vals {
        flex: 1;
        overflow: hidden;
        color: #111;
    }

    .val {
        height: 16px;
        box-sizing: border-box;
        display: flex;
        align-items: center;
        position: relative;
        padding: 0 0 1px 21px;
    }

    .dots {
        position: absolute;
        left: 11px;
        top: 0;
        width: 9px;
        height: 8px;
        border-left: 1px dotted #666;
        border-bottom: 1px dotted #666;
    }

    .tick {
        width: 11px;
        height: 11px;
        border: 1px solid #888;
        background: #fff;
        margin-right: 2px;
        position: relative;
        flex: none;
    }

    .tick::after {
        content: "";
        position: absolute;
        left: 3px;
        top: 0;
        width: 3px;
        height: 7px;
        border: solid #000;
        border-width: 0 2px 2px 0;
        transform: rotate(40deg);
    }

    .lscroll {
        width: 15px;
        background: #f0f0f0;
        display: flex;
        flex-direction: column;
        align-items: center;
        padding-top: 6px;
        box-sizing: border-box;
    }

    .lthumb {
        width: 15px;
        height: 102px;
        background: #c8c8c8;
        margin-top: 3px;
    }

    .lscroll svg:last-child {
        margin-top: 36px;
    }

    .mbtns {
        display: flex;
        justify-content: flex-end;
        gap: 11px;
        padding: 9px 8px 0 0;
    }

    .mbtns button {
        width: 73px;
        height: 21px;
        font-size: 11px;
        color: #111;
        background: #e1e1e1;
        border: 1px solid #adadad;
    }

    .mfoot {
        position: absolute;
        left: 0;
        right: 0;
        bottom: 0;
        height: 12px;
        background: linear-gradient(#f7f9fb, #dbe4ec);
        display: flex;
        justify-content: flex-end;
        align-items: center;
        padding-right: 1px;
    }

    .submenu {
        position: absolute;
        left: 519px;
        top: 169px;
        width: 111px;
        height: 96px;
        box-sizing: border-box;
        border: 1px solid #a7abb0;
        border-radius: 2px;
        background: linear-gradient(90deg, #e9eeee 0, #e9eeee 24px, #c5c5c5 24px, #c5c5c5 25px, #fafafa 25px);
        box-shadow: 2px 2px 3px rgba(0, 0, 0, .35);
        z-index: 3;
        color: #00156e;
    }

    .subhead {
        height: 25px;
        line-height: 27px;
        background: #dde7ee;
        font-weight: 700;
        padding-left: 7px;
        white-space: nowrap;
        font-size: 10.6px;
    }

    .swrow {
        height: 23px;
        display: flex;
        align-items: center;
        justify-content: center;
        padding-left: 4px;
    }

    .swrow.hot {
        height: 22px;
        background: linear-gradient(#fff8e0, #ffefb8 45%, #ffd468 50%, #ffe6a0);
        box-shadow: inset 0 0 0 1px #e2c886;
    }

    .swrow i {
        width: 48px;
        height: 13px;
        border: 1px solid #7f7f7f;
    }

    /* vertical scrollbar */
    .vscroll {
        width: 16px;
        background: #6d8fbd;
        display: flex;
        flex-direction: column;
        box-sizing: border-box;
        border-left: 1px solid #5d7fae;
    }

    .split {
        height: 8px;
        background: #eef3fa;
        border: 1px solid #b7c9e0;
        box-sizing: border-box;
        margin: 1px 1px 0;
        display: flex;
        align-items: center;
        justify-content: center;
    }

    .split i {
        width: 9px;
        height: 1px;
        background: #6d8fbd;
    }

    .varrow {
        height: 16px;
        display: flex;
        align-items: center;
        justify-content: center;
        flex: none;
    }

    .varrow .up {
        border: 5px solid transparent;
        border-bottom: 5px solid #44546f;
        border-top: 0;
    }

    .varrow .dn {
        border: 5px solid transparent;
        border-top: 5px solid #44546f;
        border-bottom: 0;
    }

    .vthumb {
        height: 441px;
        flex: none;
        margin: 1px 1px 0;
        box-sizing: border-box;
        border: 1px solid #7b98bf;
        background: linear-gradient(90deg, #e2e7ee, #c6cfdb 50%, #dfe5ed);
        display: flex;
        align-items: center;
        justify-content: center;
    }

    .vthumb b {
        width: 8px;
        height: 7px;
        background: repeating-linear-gradient(#77818d 0 1px, transparent 1px 3px);
    }

    .vtrack {
        flex: 1;
    }

    /* sheet tabs + horizontal scrollbar */
    .sheetbar {
        height: 20px;
        display: flex;
        align-items: stretch;
        background: linear-gradient(#b5cae5, #9fb9da);
        border-top: 1px solid #6f8eb8;
        box-sizing: border-box;
    }

    .navs {
        width: 52px;
        box-sizing: border-box;
        padding: 4px 0 0 6px;
        background: linear-gradient(#d9e6f6, #c3d6ee);
        border-right: 1px solid #7f9bc0;
    }

    .sheets {
        display: flex;
        width: 758px;
        padding-left: 11px;
        box-sizing: border-box;
    }

    .stab {
        width: 60px;
        line-height: 18px;
        text-align: center;
        font-size: 12.5px;
        color: #15428b;
        position: relative;
        z-index: 0;
    }

    .stab::before {
        content: "";
        position: absolute;
        inset: 0 4px 1px 4px;
        transform: skewX(-38deg);
        background: linear-gradient(#cfe0f5, #bcd0ea);
        border-right: 1px solid #5f7fab;
        border-left: 1px solid #5f7fab;
        z-index: -1;
    }

    .stab.on {
        font-weight: 700;
        width: 61px;
        z-index: 1;
    }

    .stab.on::before {
        background: linear-gradient(#f7f9fd, #e9f0f9);
        inset: 0;
        transform: none;
        border: 0;
        clip-path: polygon(0 0, 100% 0, 88% 100%, 0 100%);
    }

    .stab.add {
        width: 36px;
        display: flex;
        align-items: center;
        justify-content: center;
    }

    .hs-area {
        flex: 1;
        display: flex;
        align-items: center;
        background: #7f9dc4;
    }

    .hsplit {
        width: 6px;
        height: 15px;
        background: #eef3fa;
        border: 1px solid #b7c9e0;
        box-sizing: border-box;
        display: flex;
        align-items: center;
        justify-content: center;
        flex: none;
        margin-left: 1px;
    }

    .hsplit i {
        width: 1px;
        height: 9px;
        background: #6d8fbd;
    }

    .harr {
        flex: none;
        margin: 0 6px;
        border: 5px solid transparent;
    }

    .harr.left {
        border-right: 5px solid #44546f;
        border-left: 0;
    }

    .harr.right {
        border-left: 5px solid #44546f;
        border-right: 0;
        margin-left: 0;
    }

    .hthumb {
        width: 434px;
        height: 16px;
        flex: none;
        box-sizing: border-box;
        border: 1px solid #5d7fae;
        background: linear-gradient(#e2e7ee, #c2ccd9 60%, #dfe5ed);
        display: flex;
        align-items: center;
        justify-content: center;
    }

    .hthumb b {
        width: 7px;
        height: 8px;
        background: repeating-linear-gradient(90deg, #77818d 0 1px, transparent 1px 3px);
    }

    .htrack {
        flex: 1;
    }

    /* status bar */
    .status {
        height: 20px;
        display: flex;
        align-items: center;
        background: linear-gradient(#d7e6fa, #c0d7f5 50%, #b2cdf0);
        border-top: 1px solid #e6effb;
        box-sizing: border-box;
    }

    .ready {
        padding: 0 7px;
        height: 100%;
        line-height: 16px;
        border-right: 1px solid #a4bcdb;
        color: #15428b;
    }

    .zoombar {
        margin-left: auto;
        width: 246px;
        height: 100%;
        box-sizing: border-box;
        border-left: 1px solid #8aa6cb;
        display: flex;
        align-items: center;
        padding-left: 5px;
    }

    .views {
        display: flex;
        height: 16px;
        border: 1px solid #a3bbdb;
        border-radius: 2px;
    }

    .views span {
        width: 18px;
        display: flex;
        align-items: center;
        justify-content: center;
    }

    .views .on {
        background: linear-gradient(#fde9b4, #fbcf74);
    }

    .pct {
        margin-left: 8px;
        width: 36px;
        font-size: 11px;
    }

    .slider {
        width: 102px;
        height: 2px;
        background: #8fa9cd;
        box-shadow: 0 1px 0 #eaf2fc;
        position: relative;
    }

    .slider i {
        position: absolute;
        left: 47px;
        top: -7px;
        width: 9px;
        height: 13px;
        background: linear-gradient(#fff, #c7d6ea);
        border: 1px solid #6f8cb4;
        box-sizing: border-box;
        clip-path: polygon(0 0, 100% 0, 100% 65%, 50% 100%, 0 65%);
    }

    /* taskbar */
    .taskbar {
        height: 40px;
        background: linear-gradient(90deg, #22343f, #22343f 50%, #1c2b3d);
        display: flex;
        align-items: stretch;
        color: #fff;
        font-size: 13px;
    }

    .start {
        width: 48px;
        display: flex;
        align-items: center;
        justify-content: center;
    }

    .search {
        width: 288px;
        box-sizing: border-box;
        background: #f0f0f0;
        border: 2px solid #c8c8c8;
        display: flex;
        align-items: center;
        gap: 12px;
        padding-left: 7px;
        color: #333;
        font-size: 14px;
    }

    .apps {
        display: flex;
        padding-left: 1px;
    }

    .app {
        width: 49px;
        display: flex;
        align-items: center;
        justify-content: center;
        position: relative;
    }

    .app.tv {
        padding-right: 4px;
        box-sizing: border-box;
    }

    .app.run::after {
        content: "";
        position: absolute;
        left: 4px;
        right: 4px;
        bottom: 0;
        height: 2px;
        background: #76b9ed;
    }

    .app.active {
        background: #46575f;
    }

    .app.active::after {
        left: 0;
        right: 0;
    }

    .tray {
        margin-left: auto;
        display: flex;
        align-items: center;
        padding-right: 22px;
    }

    .temp {
        margin-left: 9px;
    }

    .haze {
        margin-left: 9px;
    }

    .t1 {
        margin-left: 23px;
    }

    .t2 {
        margin-left: 9px;
    }

    .t3 {
        margin-left: 11px;
    }

    .t4 {
        margin-left: 6px;
    }

    .t5 {
        margin-left: 8px;
    }

    .eng {
        margin-left: 12px;
        font-size: 12px;
    }

    .clock {
        margin-left: 5px;
        width: 78px;
        display: flex;
        flex-direction: column;
        align-items: center;
        font-size: 12px;
        line-height: 18px;
        padding-top: 1px;
    }

    .notif {
        margin-left: 0;
        position: relative;
        width: 24px;
        height: 24px;
        display: flex;
        align-items: center;
        justify-content: center;
    }

    .notif b {
        position: absolute;
        right: -5px;
        bottom: -3px;
        width: 16px;
        height: 16px;
        border-radius: 50%;
        background: #2a3a45;
        border: 1px solid #bbb;
        box-sizing: border-box;
        font-size: 10px;
        line-height: 14px;
        text-align: center;
        font-weight: 400;
    }
</style>
